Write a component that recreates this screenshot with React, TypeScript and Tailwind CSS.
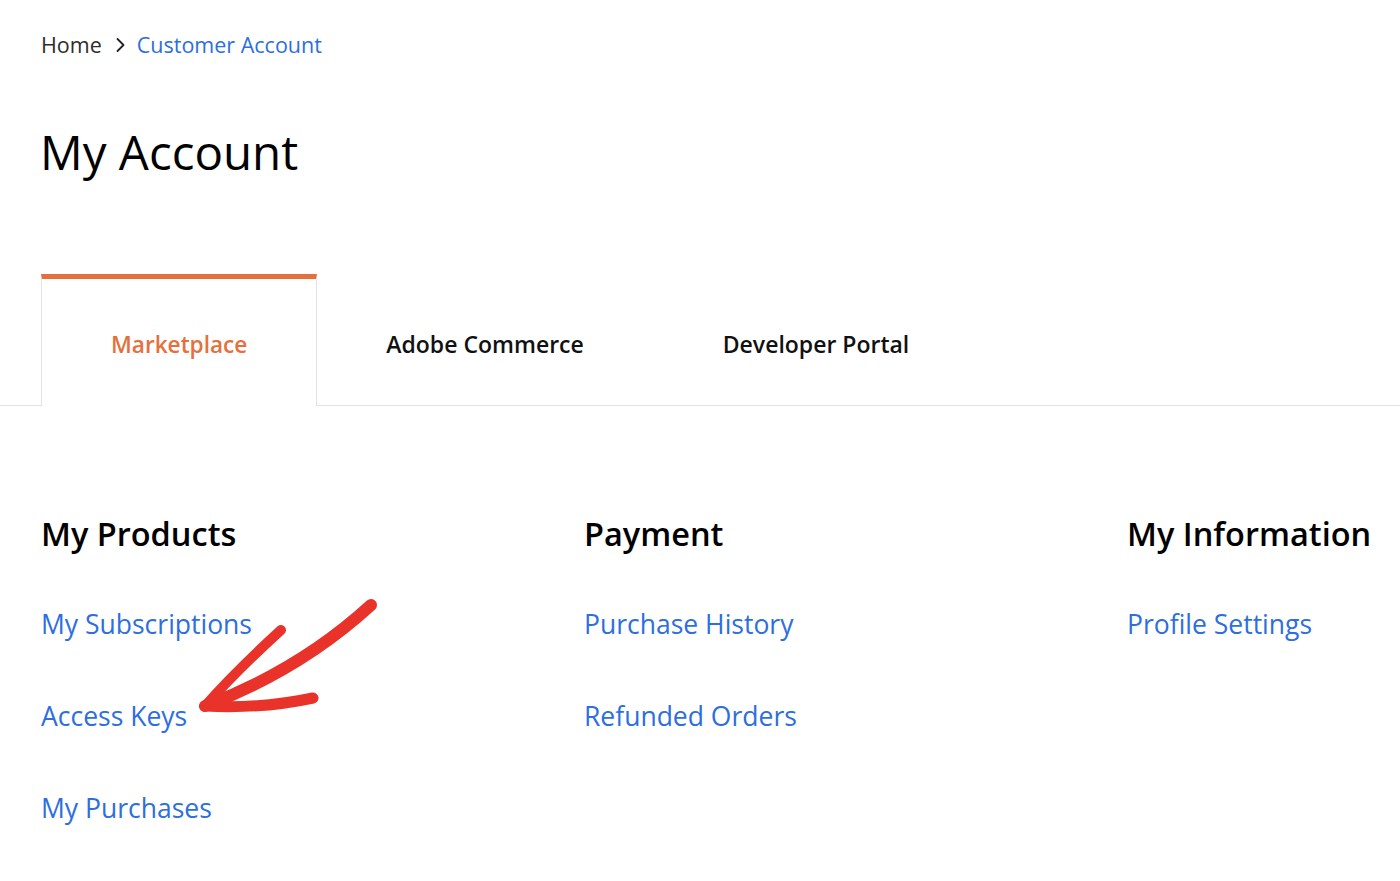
import React from "react";

const font = { fontFamily: '"Open Sans", "Noto Sans", sans-serif' };

export default function App() {
  return (
    <div className="relative w-[1400px] h-[881px] overflow-hidden bg-white" style={font}>
      {/* Breadcrumb */}
      <div className="pl-[41px] pt-[30px] flex items-center text-[21.5px] leading-[30px]">
        <span className="text-[#2c2c2c]">Home</span>
        <svg className="ml-[13px] mr-[11px]" width="11" height="16" viewBox="0 0 11 16" fill="none">
          <path d="M2.5 2 L8.5 8 L2.5 14" stroke="#222" strokeWidth="1.8" strokeLinecap="round" strokeLinejoin="round" />
        </svg>
        <span className="text-[#2d6ee0]">Customer Account</span>
      </div>

      {/* Title */}
      <h1 className="pl-[40px] mt-[64px] text-[47.5px] leading-[56px] text-black">My Account</h1>

      {/* Tabs */}
      <div className="mt-[94px] flex border-b border-[#e3e3e3] pl-[41px]">
        <div className="-mb-px h-[132px] pt-[4px] px-[69px] flex items-center bg-white border-t-[5px] border-t-[#e5703e] border-x border-x-[#e3e3e3] text-[22.6px] font-semibold text-[#e5703e]">
          Marketplace
        </div>
        <div className="h-[131px] pt-[9px] px-[69px] flex items-center text-[23px] font-semibold text-[#111]">
          Adobe Commerce
        </div>
        <div className="h-[131px] pt-[9px] px-[70px] flex items-center text-[23px] font-semibold text-[#111]">
          Developer Portal
        </div>
      </div>

      {/* Sections */}
      <div className="mt-[106px] pl-[41px] grid grid-cols-[543px_543px_1fr]">
        <Section title="My Products" links={["My Subscriptions", "Access Keys", "My Purchases"]} />
        <Section title="Payment" links={["Purchase History", "Refunded Orders"]} />
        <Section title="My Information" links={["Profile Settings"]} />
      </div>

      {/* Red annotation arrow */}
      <svg className="absolute left-0 top-0 pointer-events-none" width="1400" height="881" viewBox="0 0 1400 881" fill="none">
        <path d="M371 605 Q 300 670 205 706" stroke="#e8322a" strokeWidth="12" strokeLinecap="round" />
        <path d="M281 630 Q 235 672 205 706" stroke="#e8322a" strokeWidth="10" strokeLinecap="round" />
        <path d="M205 706 Q 262 709 313 698" stroke="#e8322a" strokeWidth="11" strokeLinecap="round" />
      </svg>
    </div>
  );
}

function Section({ title, links }: { title: string; links: string[] }) {
  return (
    <div className="flex flex-col">
      <h2 className="text-[32.5px] leading-[44px] font-semibold text-black">{title}</h2>
      <div className="mt-[50px] flex flex-col gap-[56px]">
        {links.map((l) => (
          <a key={l} className="text-[26.5px] leading-[36px] text-[#2d6ee0] cursor-pointer">
            {l}
          </a>
        ))}
      </div>
    </div>
  );
}
